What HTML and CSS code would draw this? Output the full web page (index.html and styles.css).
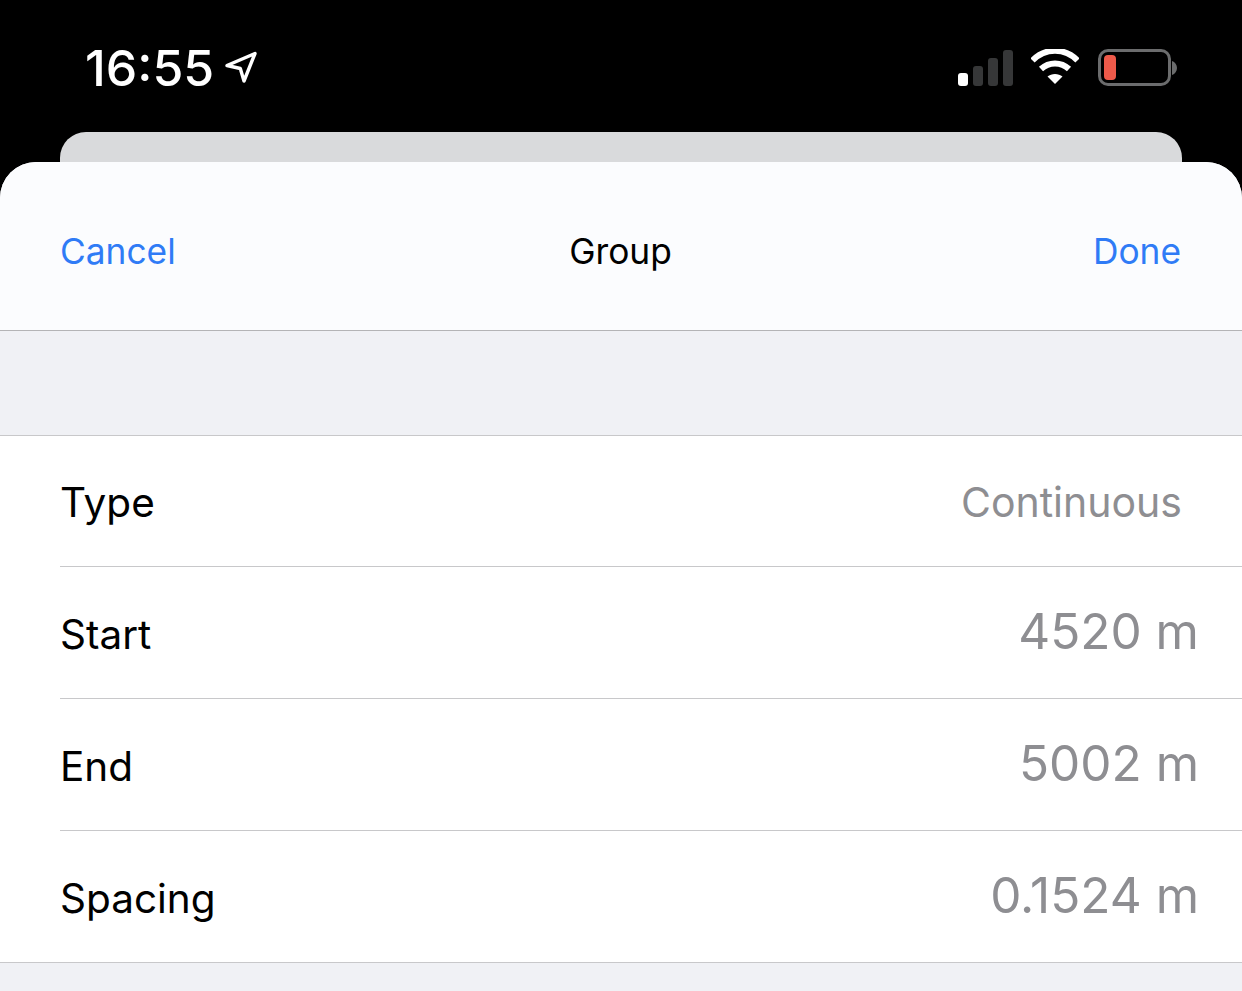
FILE: index.html
```html
<!DOCTYPE html>
<html lang="en">
<head>
<meta charset="utf-8">
<title>Group</title>
<link rel="stylesheet" href="styles.css">
</head>
<body>
<div class="status">
  <div class="status-left">
    <span class="time">16:55</span>
    <svg class="loc" width="34" height="34" viewBox="0 0 34 34"><path d="M3 15.5 31 3.5 20 31 16.3 18.5Z" fill="none" stroke="#fff" stroke-width="3.4" stroke-linejoin="round"/></svg>
  </div>
  <div class="status-right">
    <svg class="signal" width="56" height="36" viewBox="0 0 56 36"><rect x="1" y="23" width="10" height="13" rx="3" fill="#fff"/><rect x="16" y="16" width="10" height="20" rx="3" fill="#363738"/><rect x="31" y="8" width="10" height="28" rx="3" fill="#363738"/><rect x="46" y="0" width="10" height="36" rx="3" fill="#363738"/></svg>
    <svg class="wifi" width="48" height="36" viewBox="0 0 48 36"><path d="M1.5 11.5C14 -1.5 34 -1.5 46.5 11.5" fill="none" stroke="#fff" stroke-width="6"/><path d="M10 20C18 12.5 30 12.5 38 20" fill="none" stroke="#fff" stroke-width="6"/><path d="M24 35 16.5 27.5C20.5 24 27.5 24 31.5 27.5Z" fill="#fff"/></svg>
    <div class="battery"><div class="battery-body"><div class="battery-level"></div></div><svg class="battery-cap" width="5" height="14" viewBox="0 0 5 14"><path d="M0 0C3 1 5 4 5 7S3 13 0 14Z" fill="#6b6c6d"/></svg></div>
  </div>
</div>
<div class="back-card"></div>
<main class="sheet">
  <header class="nav">
    <a class="nav-btn">Cancel</a>
    <h1 class="nav-title">Group</h1>
    <a class="nav-btn nav-btn-end">Done</a>
  </header>
  <div class="spacer"></div>
  <section class="list">
    <div class="row"><div class="row-in"><span class="label">Type</span><span class="value">Continuous</span></div></div>
    <div class="row"><div class="row-in"><span class="label">Start</span><span class="value num">4520 m</span></div></div>
    <div class="row"><div class="row-in"><span class="label">End</span><span class="value num">5002 m</span></div></div>
    <div class="row"><div class="row-in last"><span class="label">Spacing</span><span class="value num">0.1524 m</span></div></div>
  </section>
</main>
</body>
</html>
```
FILE: styles.css
```css
* { box-sizing: border-box; }
html, body { margin: 0; padding: 0; }
body {
  width: 1242px;
  height: 991px;
  overflow: hidden;
  background: #000;
  font-family: Inter, "Liberation Sans", sans-serif;
  color: #000;
}
.status {
  height: 132px;
  display: flex;
  justify-content: space-between;
  padding: 44px 65px 0 85px;
  color: #fff;
}
.status-left { display: flex; align-items: flex-start; height: 50px; }
.time { font-size: 50px; line-height: 50px; font-weight: 500; margin-top: -1px; }
.loc { margin: 6px 0 0 10px; }
.status-right { display: flex; align-items: flex-start; }
.signal { margin: 6px 0 0 0; }
.wifi { margin: 5px 0 0 18px; }
.battery { display: flex; align-items: center; margin: 5px 0 0 19px; }
.battery-body {
  width: 73px;
  height: 37px;
  border: 3px solid #6b6c6d;
  border-radius: 10px;
  padding: 3px;
}
.battery-level { width: 12px; height: 100%; background: #ee5a4a; border-radius: 4px; }
.battery-cap { margin-left: 1px; }
.back-card {
  height: 30px;
  margin: 0 60px;
  background: #d9dadc;
  border-radius: 26px 26px 0 0;
}
.sheet {
  height: 829px;
  background: #f0f1f5;
  border-radius: 36px 36px 0 0;
  overflow: hidden;
}
.nav {
  height: 169px;
  background: #fbfcfe;
  border-bottom: 1px solid #b4b4b6;
  display: flex;
  justify-content: space-between;
  align-items: center;
  padding: 10px 61px 0 60px;
}
.nav-btn { flex: 1 1 0; font-size: 35.3px; color: #2f7bf6; }
.nav-btn-end { text-align: right; }
.nav-title { margin: 0; font-size: 35.3px; font-weight: 400; color: #000; }
.spacer { height: 104px; }
.list {
  background: #fff;
  border-top: 1px solid #c8c8ca;
  border-bottom: 1px solid #c8c8ca;
}
.row { padding-left: 60px; height: 132px; }
.row:first-child, .row:last-child { height: 131px; }
.row:first-child .label { margin-top: 2px; }
.row-in {
  height: 100%;
  display: flex;
  justify-content: space-between;
  align-items: center;
  border-bottom: 1px solid #c8c8ca;
  padding-right: 60px;
}
.row-in.last { border-bottom: 0; }
.label { font-size: 40.5px; margin-top: 4px; }
.value { font-size: 41px; color: #8e8e92; margin-top: 2px; }
.value.num { font-size: 49.5px; margin-right: -17px; margin-top: -4px; }
```
